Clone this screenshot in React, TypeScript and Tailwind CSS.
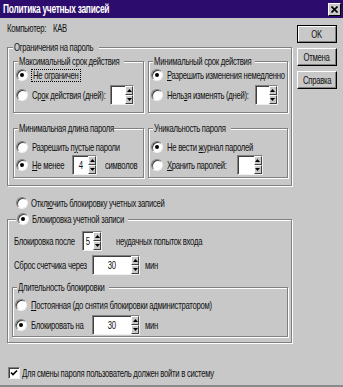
import React from "react";

// The dialog's font is very narrow; text is squeezed horizontally.
function T({ children, center }: { children: React.ReactNode; center?: boolean }) {
  return (
    <span className={"inline-block whitespace-nowrap scale-x-[0.7] " + (center ? "origin-center" : "origin-left")}>
      {children}
    </span>
  );
}

function Radio({ checked }: { checked?: boolean }) {
  return (
    <span className="flex h-[12px] w-[12px] shrink-0 items-center justify-center rounded-full border border-t-[#808080] border-l-[#808080] border-r-[#f0f0f0] border-b-[#f0f0f0] bg-white shadow-[inset_1px_1px_0_#404040]">
      {checked && <span className="h-[4px] w-[4px] rounded-full bg-black" />}
    </span>
  );
}

function Check() {
  return (
    <span className="flex h-[12px] w-[12px] shrink-0 items-center justify-center border border-t-[#808080] border-l-[#808080] border-r-[#f0f0f0] border-b-[#f0f0f0] bg-white shadow-[inset_1px_1px_0_#404040]">
      <svg width="8" height="8" viewBox="0 0 8 8">
        <path d="M1 3.5 L3 5.5 L7 1.5" stroke="#000" strokeWidth="1.6" fill="none" />
      </svg>
    </span>
  );
}

function Spin({ value, className }: { value?: string; className: string }) {
  return (
    <div className={"flex h-[20px] shrink-0 border border-t-[#808080] border-l-[#808080] border-r-[#f0f0f0] border-b-[#f0f0f0] bg-white shadow-[inset_1px_1px_0_#404040] " + className}>
      <div className="flex flex-1 items-center justify-center leading-[18px]">{value && <T center>{value}</T>}</div>
      <div className="flex w-[8px] flex-col bg-[#c8c8c8]">
        <div className="flex flex-1 items-center justify-center border border-t-white border-l-white border-r-[#404040] border-b-[#404040]">
          <svg width="5" height="3" viewBox="0 0 5 3">
            <path d="M0 3 L2.5 0 L5 3 Z" fill="#000" />
          </svg>
        </div>
        <div className="flex flex-1 items-center justify-center border border-t-white border-l-white border-r-[#404040] border-b-[#404040]">
          <svg width="5" height="3" viewBox="0 0 5 3">
            <path d="M0 0 L2.5 3 L5 0 Z" fill="#000" />
          </svg>
        </div>
      </div>
    </div>
  );
}

const box =
  "min-w-0 border border-[#808080] shadow-[1px_1px_0_#fff,inset_1px_1px_0_#fff]";
const legend = "whitespace-nowrap bg-[#c8c8c8] px-[1px] leading-[13px]";

function Btn({ label, def }: { label: string; def?: boolean }) {
  return (
    <div
      className={
        "h-[18px] w-[40px] overflow-hidden " +
        (def ? "border border-black" : "border border-t-white border-l-white border-r-black border-b-black")
      }
    >
      <div
        className={
          "flex h-full items-center justify-center whitespace-nowrap " +
          (def
            ? "border border-t-white border-l-white border-r-[#808080] border-b-[#808080]"
            : "shadow-[inset_-1px_-1px_0_#808080]")
        }
      >
        <T center>{label}</T>
      </div>
    </div>
  );
}

export default function App() {
  return (
    <div className="h-[387px] w-[343px] overflow-hidden border-b-[2px] border-b-[#8a8a8a] bg-[#c8c8c8] font-['Liberation_Sans',Arial,sans-serif] text-[11px] leading-[13px] tracking-[-0.4px] text-[#111]">
      {/* Title bar */}
      <div className="flex h-[18px] items-center bg-[#2c0c6c] pl-[3px] pr-[2px]">
        <span className="text-[12px] font-bold text-white">
          <T>Политика учетных записей</T>
        </span>
        <div className="ml-auto flex h-[13px] w-[13px] items-center justify-center border border-t-white border-l-white border-r-black border-b-black bg-[#c8c8c8]">
          <svg width="7" height="7" viewBox="0 0 7 7">
            <path d="M0.5 0.5 L6.5 6.5 M6.5 0.5 L0.5 6.5" stroke="#000" strokeWidth="1.6" />
          </svg>
        </div>
      </div>

      <div className="flex pl-[7px]">
        {/* Left column */}
        <div className="w-[285px]">
          <div className="flex h-[23px] pt-[4px]">
            <span className="w-[46px] shrink-0"><T>Компьютер:</T></span>
            <T>КАВ</T>
          </div>

          <fieldset className={box + " pb-[7px] pl-[5px] pr-[3px]"}>
            <legend className={legend + " w-[86px]"}><T>Ограничения на пароль</T></legend>

            <div className="mt-[1px] flex gap-[4px]">
              <fieldset className={box + " w-[131px] pb-[7px] pl-[2px]"}>
                <legend className={legend + " ml-[2px] w-[106px]"}><T>Максимальный срок действия</T></legend>
                <div className="flex h-[14px] items-center">
                  <Radio checked />
                  <span className="ml-[3px] h-[13px] w-[50px] border border-dotted border-black pl-[1px] leading-[11px]">
                    <T>Не ограничен</T>
                  </span>
                </div>
                <div className="mt-[3px] flex h-[20px] items-center">
                  <Radio />
                  <span className="ml-[4px] w-[78px] shrink-0">
                    <T>Ср<u>о</u>к действия (дней):</T>
                  </span>
                  <Spin className="w-[24px]" />
                </div>
              </fieldset>

              <fieldset className={box + " w-[141px] overflow-hidden pb-[7px] pl-[2px]"}>
                <legend className={legend + " ml-[2px] w-[102px]"}><T>Минимальный срок действия</T></legend>
                <div className="flex h-[14px] items-center">
                  <Radio checked />
                  <span className="ml-[4px]">
                    <T><u>Р</u>азрешить изменения немедленно</T>
                  </span>
                </div>
                <div className="mt-[3px] flex h-[20px] items-center">
                  <Radio />
                  <span className="ml-[4px] w-[88px] shrink-0">
                    <T>Нель<u>з</u>я изменять (дней):</T>
                  </span>
                  <Spin className="w-[23px]" />
                </div>
              </fieldset>
            </div>

            <div className="mt-[9px] flex gap-[4px]">
              <fieldset className={box + " w-[131px] pb-[2px] pl-[2px]"}>
                <legend className={legend + " ml-[2px] w-[94px]"}><T>Минимальная длина пароля</T></legend>
                <div className="mt-[5px] flex h-[14px] items-center">
                  <Radio />
                  <span className="ml-[4px]">
                    <T>Разрешить п<u>у</u>стые пароли</T>
                  </span>
                </div>
                <div className="mt-[1px] flex h-[20px] items-center">
                  <Radio checked />
                  <span className="ml-[4px] w-[40px] shrink-0">
                    <T><u>Н</u>е менее</T>
                  </span>
                  <Spin value="4" className="w-[25px]" />
                  <span className="ml-[8px]"><T>символов</T></span>
                </div>
              </fieldset>

              <fieldset className={box + " w-[141px] pb-[2px] pl-[2px]"}>
                <legend className={legend + " ml-[2px] w-[78px]"}><T>Уникальность пароля</T></legend>
                <div className="mt-[5px] flex h-[14px] items-center">
                  <Radio checked />
                  <span className="ml-[4px]">
                    <T>Не вести <u>ж</u>урнал паролей</T>
                  </span>
                </div>
                <div className="mt-[1px] flex h-[20px] items-center">
                  <Radio />
                  <span className="ml-[4px] w-[70px] shrink-0">
                    <T><u>Х</u>ранить паролей:</T>
                  </span>
                  <Spin className="w-[26px]" />
                </div>
              </fieldset>
            </div>
          </fieldset>

          <div className="mt-[10px] flex h-[14px] items-center pl-[9px]">
            <Radio />
            <span className="ml-[3px]">
              <T>Откл<u>ю</u>чить блокировку учетных записей</T>
            </span>
          </div>

          <fieldset className={box + " mt-[2px] pb-[5px] pl-[4px] pr-[3px]"}>
            <legend className={legend + " ml-[4px] flex h-[14px] w-[112px] items-center"}>
              <Radio checked />
              <span className="ml-[3px]"><T>Блокировка учетной записи</T></span>
            </legend>
            <div className="mt-[5px] flex h-[20px] items-center pl-[2px]">
              <span className="w-[68px] shrink-0"><T>Блокировка после</T></span>
              <Spin value="5" className="w-[20px]" />
              <span className="ml-[14px]">
                <T>не<u>у</u>дачных попыток входа</T>
              </span>
            </div>
            <div className="mt-[4px] flex h-[20px] items-center pl-[2px]">
              <span className="w-[78px] shrink-0"><T>Сброс счетчика через</T></span>
              <Spin value="30" className="w-[48px]" />
              <span className="ml-[5px]"><T>мин</T></span>
            </div>

            <fieldset className={box + " mt-[6px] pb-[1px] pl-[2px]"}>
              <legend className={legend + " ml-[2px] w-[92px]"}><T>Длительность блокировки</T></legend>
              <div className="mt-[4px] flex h-[14px] items-center">
                <Radio />
                <span className="ml-[4px]">
                  <T><u>П</u>остоянная (до снятия блокировки администратором)</T>
                </span>
              </div>
              <div className="mt-[3px] flex h-[20px] items-center">
                <Radio checked />
                <span className="ml-[4px] w-[61px] shrink-0"><T>Блокировать на</T></span>
                <Spin value="30" className="w-[48px]" />
                <span className="ml-[5px]"><T>мин</T></span>
              </div>
            </fieldset>
          </fieldset>

          <div className="mt-[23px] flex h-[14px] items-center pl-[1px]">
            <Check />
            <span className="ml-[2px]">
              <T><u>Д</u>ля смены пароля пользователь должен войти в систему</T>
            </span>
          </div>
        </div>

        {/* Right column: buttons */}
        <div className="ml-[5px] flex flex-col gap-[5px] pt-[7px]">
          <Btn label="OK" def />
          <Btn label="Отмена" />
          <Btn label="Справка" />
        </div>
      </div>
    </div>
  );
}
